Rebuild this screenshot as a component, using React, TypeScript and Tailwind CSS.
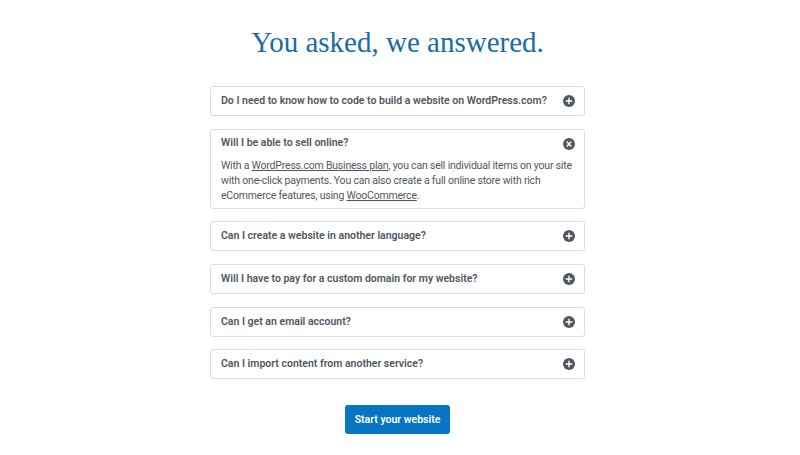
import React from "react";

const Plus = () => (
  <svg width="12" height="12" viewBox="0 0 12 12" className="shrink-0">
    <circle cx="6" cy="6" r="6" fill="#50575e" />
    <path d="M6 3.2v5.6M3.2 6h5.6" stroke="#fff" strokeWidth="1.4" strokeLinecap="round" />
  </svg>
);

const Close = () => (
  <svg width="12" height="12" viewBox="0 0 12 12" className="shrink-0">
    <circle cx="6" cy="6" r="6" fill="#50575e" />
    <path d="M4.1 4.1l3.8 3.8M7.9 4.1l-3.8 3.8" stroke="#fff" strokeWidth="1.4" strokeLinecap="round" />
  </svg>
);

const Q = ({ q }: { q: string }) => (
  <div className="h-[30px] border border-[#dcdcde] rounded-[3px] bg-white flex items-center justify-between pl-[10px] pr-[9px]">
    <span className="text-[10.5px] font-semibold text-[#50575e] leading-none whitespace-nowrap">{q}</span>
    <Plus />
  </div>
);

export default function App() {
  return (
    <div
      className="w-[800px] h-[455px] bg-white flex flex-col items-center pr-[5px]"
      style={{ fontFamily: "Roboto, 'Noto Sans', sans-serif" }}
    >
      <h1
        className="mt-[24px] text-[29px] leading-[36px] text-[#1b6ba5]"
        style={{ fontFamily: "'Liberation Serif', serif" }}
      >
        You asked, we answered.
      </h1>
      <div className="mt-[26px] w-[375px] flex flex-col gap-[12.7px]">
        <Q q="Do I need to know how to code to build a website on WordPress.com?" />
        <div className="border border-[#dcdcde] rounded-[3px] bg-white pl-[10px] pr-[9px] pt-[8px] pb-[5px]">
          <div className="flex items-center justify-between h-[12px] mb-[8px]">
            <span className="text-[10.5px] font-semibold text-[#50575e] leading-none">Will I be able to sell online?</span>
            <Close />
          </div>
          <p className="text-[10.5px] leading-[15px] tracking-[-0.2px] text-[#50575e]">
            With a <span className="underline">WordPress.com Business plan</span>, you can sell individual items on your site with one-click payments. You can also create a full online store with rich eCommerce features, using <span className="underline">WooCommerce</span>.
          </p>
        </div>
        <Q q="Can I create a website in another language?" />
        <Q q="Will I have to pay for a custom domain for my website?" />
        <Q q="Can I get an email account?" />
        <Q q="Can I import content from another service?" />
      </div>
      <button className="mt-[26px] h-[29px] w-[105px] rounded-[3px] bg-[#0675c4] text-white text-[10.5px] font-semibold">
        Start your website
      </button>
    </div>
  );
}
